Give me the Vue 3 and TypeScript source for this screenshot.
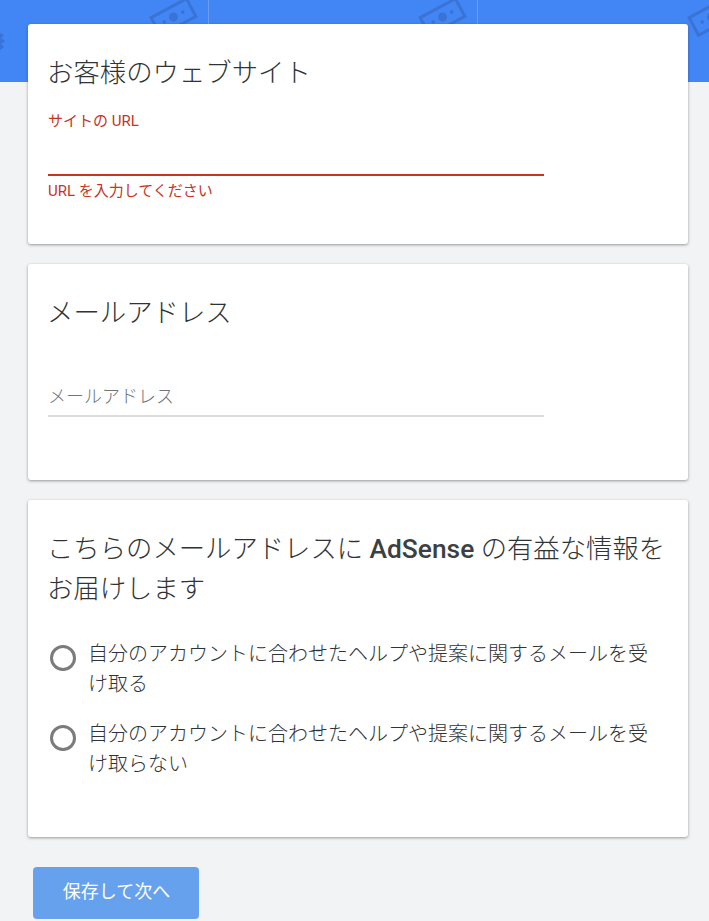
<script setup lang="ts">
const bills = [173.5, 442.5, 711.5];
const dividers = [208.5, 477.5];
const options = [
  '自分のアカウントに合わせたヘルプや提案に関するメールを受け取る',
  '自分のアカウントに合わせたヘルプや提案に関するメールを受け取らない',
];
</script>

<template>
  <div class="page">
    <header class="banner">
      <svg class="pattern" viewBox="0 0 709 82" width="709" height="82">
        <line v-for="x in dividers" :key="x" :x1="x" :x2="x" y1="0" y2="82" stroke="#6a9ef6" stroke-width="1" />
        <g v-for="x in bills" :key="x" :transform="`translate(${x} 17) rotate(-28)`" fill="#3a73d6">
          <rect x="-20" y="-10" width="40" height="20" fill="none" stroke="#3a73d6" stroke-width="3" />
          <circle r="4.5" />
          <circle cx="-10.5" r="1.8" />
          <circle cx="10.5" r="1.8" />
        </g>
        <path d="M0 33 L4 35 L1 38 L5 41 L1 44 L4 47 L0 50 Z" fill="#3a73d6" />
      </svg>
    </header>
    <main class="content">
      <section class="card card-site">
        <h2>お客様のウェブサイト</h2>
        <label class="label-error">サイトの URL</label>
        <div class="line line-error"></div>
        <p class="error">URL を入力してください</p>
      </section>
      <section class="card card-mail">
        <h2>メールアドレス</h2>
        <div class="placeholder">メールアドレス</div>
        <div class="line"></div>
      </section>
      <section class="card card-opts">
        <h2 class="long">こちらのメールアドレスに <b>AdSense</b> の有益な情報をお届けします</h2>
        <div class="options">
          <div v-for="o in options" :key="o" class="option">
            <span class="radio"></span>
            <span class="option-text">{{ o }}</span>
          </div>
        </div>
      </section>
      <button class="save" type="button">保存して次へ</button>
    </main>
  </div>
</template>

<style>
html, body { margin: 0; background: #f1f3f4; }
</style>

<style scoped>
.page {
  height: 921px;
  overflow: hidden;
  background: #f1f3f4;
  font-family: Roboto, "Noto Sans CJK JP", sans-serif;
  color: #3c4043;
}
.banner {
  height: 82px;
  background: #4285f4;
  overflow: hidden;
}
.pattern { display: block; }
.content {
  margin-top: -58px;
  padding: 0 21px 0 28px;
  display: flex;
  flex-direction: column;
  gap: 20px;
  position: relative;
}
.card {
  background: #fff;
  border-radius: 3px;
  box-shadow: 0 1px 3px rgba(60, 64, 67, 0.5);
  padding: 29px 20px 0;
  box-sizing: border-box;
}
.card-site { height: 220px; }
.card-mail { height: 216px; }
.card-opts { height: 337px; }
h2 {
  margin: 0 0 0 -1px;
  padding-top: 1px;
  font-size: 26.4px;
  line-height: 38px;
  font-weight: 300;
  color: #303336;
}
h2 b { font-weight: 500; color: #3c4043; }
.long { font-size: 26.35px; line-height: 40px; margin: -1px 0 0 -1px; }
.label-error {
  display: block;
  margin-top: 19px;
  font-size: 15px;
  line-height: 20px;
  color: #c5351f;
}
.line {
  width: 496px;
  height: 2px;
  background: #dadce0;
}
.line-error {
  margin-top: 43px;
  background: #c5351f;
}
.error {
  margin: 5px 0 0;
  font-size: 15px;
  line-height: 20px;
  color: #c5351f;
}
.placeholder {
  margin-top: 51px;
  padding-bottom: 4px;
  font-size: 18px;
  line-height: 28px;
  color: #70757a;
  font-weight: 300;
}
.options {
  margin-top: 30px;
  display: flex;
  flex-direction: column;
  gap: 20px;
}
.option {
  display: flex;
  gap: 12px;
  font-size: 20px;
  line-height: 30px;
  color: #303336;
}
.radio {
  flex: none;
  width: 20px;
  height: 20px;
  margin: 6px 0 0 2px;
  border: 3px solid #7b7b7b;
  border-radius: 50%;
}
.option-text { width: 562px; font-weight: 300; }
.save {
  margin: 10px 0 0 5px;
  width: 166px;
  height: 52px;
  padding: 0 0 7px 1px;
  border: 0;
  border-radius: 4px;
  background: #66a1ee;
  color: #fff;
  font: inherit;
  font-size: 18px;
}
</style>
